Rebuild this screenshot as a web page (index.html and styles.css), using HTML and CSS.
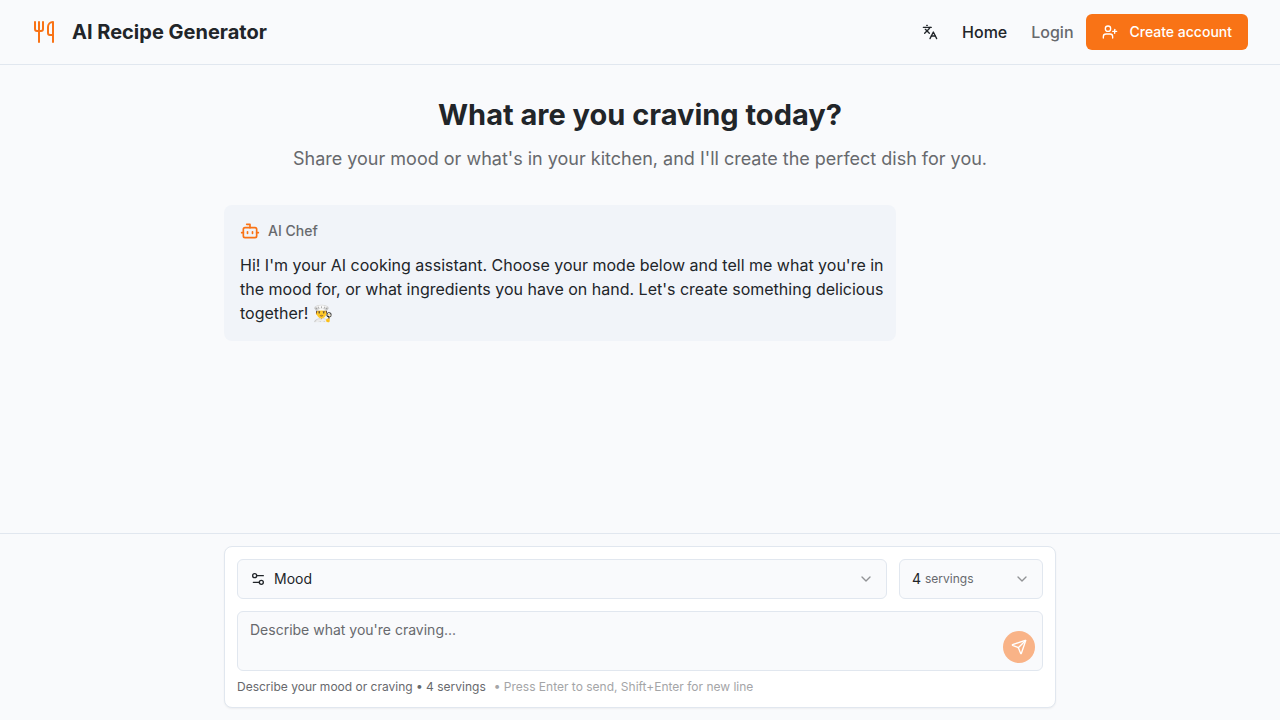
FILE: index.html
```html
<!DOCTYPE html>
<html lang="en">
<head>
    <meta charset="UTF-8">
    <meta name="viewport" content="width=device-width, initial-scale=1.0">
    <title>AI Recipe Generator</title>
    <link rel="stylesheet" href="styles.css">
</head>
<body>
    <header class="header">
        <a href="#" class="brand">
            <svg class="icon icon-lg" viewBox="0 0 24 24">
                <path d="M3 2v7c0 1.1.9 2 2 2h4a2 2 0 0 0 2-2V2"/>
                <path d="M7 2v20"/>
                <path d="M21 15V2a5 5 0 0 0-5 5v6c0 1.1.9 2 2 2h3Zm0 0v7"/>
            </svg>
            <span>AI Recipe Generator</span>
        </a>
        <nav class="nav">
            <button type="button" class="language" aria-label="Change language">
                <svg class="icon" viewBox="0 0 24 24">
                    <path d="m5 8 6 6"/>
                    <path d="m4 14 6-6 2-3"/>
                    <path d="M2 5h12"/>
                    <path d="M7 2h1"/>
                    <path d="m22 22-5-10-5 10"/>
                    <path d="M14 18h6"/>
                </svg>
            </button>
            <a href="#" class="active">Home</a>
            <div class="account">
                <a href="#login">Login</a>
                <a href="#signup" class="signup">
                    <svg class="icon" viewBox="0 0 24 24">
                        <path d="M16 21v-2a4 4 0 0 0-4-4H6a4 4 0 0 0-4 4v2"/>
                        <circle cx="9" cy="7" r="4"/>
                        <path d="M19 8v6"/>
                        <path d="M22 11h-6"/>
                    </svg>
                    Create account
                </a>
            </div>
        </nav>
    </header>

    <main class="main">
        <div class="container">
            <div class="intro">
                <h1>What are you craving today?</h1>
                <p>Share your mood or what's in your kitchen, and I'll create the perfect dish for you.</p>
            </div>
            <div class="message">
                <div class="message-author">
                    <svg class="icon icon-md" viewBox="0 0 24 24">
                        <path d="M12 8V4H8"/>
                        <rect width="16" height="12" x="4" y="8" rx="2"/>
                        <path d="M2 14h2"/>
                        <path d="M20 14h2"/>
                        <path d="M15 13v2"/>
                        <path d="M9 13v2"/>
                    </svg>
                    <span>AI Chef</span>
                </div>
                <p>Hi! I'm your AI cooking assistant. Choose your mode below and tell me what you're in the mood for, or what ingredients you have on hand. Let's create something delicious together! 👨‍🍳</p>
            </div>
        </div>
    </main>

    <footer class="composer">
        <div class="container">
            <form class="card" id="recipe-form">
                <div class="options">
                    <div class="select select-mode">
                        <svg class="icon select-icon" viewBox="0 0 24 24">
                            <path d="M20 7h-9"/>
                            <path d="M14 17H5"/>
                            <circle cx="17" cy="17" r="3"/>
                            <circle cx="7" cy="7" r="3"/>
                        </svg>
                        <select id="mode" aria-label="Mode">
                            <option>Mood</option>
                            <option>Ingredients</option>
                        </select>
                        <svg class="icon chevron" viewBox="0 0 24 24"><path d="m6 9 6 6 6-6"/></svg>
                    </div>
                    <div class="select select-servings">
                        <select id="servings">
                            <option>1</option>
                            <option>2</option>
                            <option>3</option>
                            <option selected>4</option>
                            <option>5</option>
                            <option>6</option>
                        </select>
                        <label for="servings" class="unit">servings</label>
                        <svg class="icon chevron" viewBox="0 0 24 24"><path d="m6 9 6 6 6-6"/></svg>
                    </div>
                </div>
                <div class="prompt">
                    <textarea id="prompt" aria-label="Describe what you're craving" placeholder="Describe what you're craving..."></textarea>
                    <button type="submit" class="send" aria-label="Send" disabled>
                        <svg class="icon" viewBox="0 0 24 24">
                            <path d="M14.536 21.686a.5.5 0 0 0 .937-.024l6.5-19a.496.496 0 0 0-.635-.635l-19 6.5a.5.5 0 0 0-.024.937l7.93 3.18a2 2 0 0 1 1.112 1.11z"/>
                            <path d="m21.854 2.147-10.94 10.939"/>
                        </svg>
                    </button>
                </div>
                <p class="hint">
                    <span>Describe your mood or craving • 4 servings</span>
                    <span class="hint-keys">• Press Enter to send, Shift+Enter for new line</span>
                </p>
            </form>
        </div>
    </footer>
</body>
</html>
```

FILE: styles.css
```css
* {
    box-sizing: border-box;
}
body {
    font-family: Inter, "Noto Color Emoji", sans-serif;
    font-size: 16px;
    line-height: 24px;
    margin: 0;
    color: #212529;
    background: #f9fafc;
    display: flex;
    flex-direction: column;
    min-height: 100vh;
}
h1, p {
    margin: 0;
}
a {
    color: inherit;
    text-decoration: none;
}
button, select, textarea {
    font: inherit;
    color: inherit;
}
.icon {
    width: 16px;
    height: 16px;
    flex-shrink: 0;
    fill: none;
    stroke: currentColor;
    stroke-width: 2;
    stroke-linecap: round;
    stroke-linejoin: round;
}
.icon-md {
    width: 20px;
    height: 20px;
    color: #f97316;
}
.icon-lg {
    width: 24px;
    height: 24px;
    color: #f97316;
}

/* header */
.header {
    display: flex;
    align-items: center;
    justify-content: space-between;
    padding: 14px 32px;
    border-bottom: 1px solid #e1e7ef;
}
.brand {
    display: flex;
    align-items: center;
    gap: 16px;
    font-size: 20px;
    font-weight: 700;
}
.nav {
    display: flex;
    align-items: center;
    gap: 24px;
    font-weight: 500;
    color: #67696d;
}
.nav .active {
    color: #212529;
}
.language {
    display: flex;
    padding: 0;
    border: none;
    background: none;
    color: #212529;
    cursor: pointer;
}
.account {
    display: flex;
    align-items: center;
    gap: 12px;
}
.signup {
    display: flex;
    align-items: center;
    gap: 12px;
    height: 36px;
    padding: 0 16px;
    border-radius: 6px;
    background: #f97316;
    color: white;
    font-size: 14px;
}
.signup:hover {
    background: #ea6a10;
}

/* conversation */
.main {
    flex-grow: 1;
    padding: 32px 0;
}
.container {
    max-width: 896px;
    margin: 0 auto;
    padding: 0 32px;
}
.intro {
    text-align: center;
    margin-bottom: 32px;
}
.intro h1 {
    font-size: 29px;
    line-height: 36px;
    font-weight: 700;
    margin-bottom: 12px;
}
.intro p {
    font-size: 18px;
    line-height: 28px;
    color: #67696d;
}
.message {
    max-width: 672px;
    padding: 16px 8px 16px 16px;
    border-radius: 8px;
    background: #f1f4f9;
}
.message-author {
    display: flex;
    align-items: center;
    gap: 8px;
    margin-bottom: 12px;
    font-size: 14px;
    line-height: 20px;
    font-weight: 500;
    color: #67696d;
}

/* composer */
.composer {
    padding: 12px 0;
    border-top: 1px solid #e1e7ef;
}
.card {
    padding: 12px;
    border: 1px solid #e1e7ef;
    border-radius: 8px;
    background: white;
    box-shadow: 0 1px 2px rgba(0, 0, 0, 0.05);
}
.options {
    display: flex;
    gap: 12px;
    margin-bottom: 12px;
}
.select {
    position: relative;
    display: flex;
    align-items: center;
}
.select-mode {
    flex-grow: 1;
}
.select-servings {
    width: 144px;
}
.select select {
    appearance: none;
    width: 100%;
    height: 40px;
    padding: 0 12px;
    border: 1px solid #e1e7ef;
    border-radius: 6px;
    background: #f9fafc;
    font-size: 14px;
}
.select-mode select {
    padding-left: 36px;
}
.select-icon, .chevron, .unit {
    position: absolute;
    pointer-events: none;
}
.select-icon {
    left: 13px;
}
.chevron {
    right: 13px;
    color: #919396;
}
.unit {
    left: 26px;
    font-size: 12px;
    color: #67696d;
}
.prompt {
    position: relative;
    margin-bottom: 8px;
}
.prompt textarea {
    display: block;
    width: 100%;
    height: 60px;
    padding: 8px 48px 8px 12px;
    border: 1px solid #e1e7ef;
    border-radius: 6px;
    background: #f9fafc;
    font-size: 14px;
    line-height: 20px;
    resize: none;
}
.prompt textarea::placeholder {
    color: #67696d;
}
.send {
    position: absolute;
    right: 8px;
    bottom: 8px;
    display: flex;
    align-items: center;
    justify-content: center;
    width: 32px;
    height: 32px;
    padding: 0;
    border: none;
    border-radius: 50%;
    background: #f97316;
    color: white;
}
.send:disabled {
    background: #f9b387;
}
.hint {
    display: flex;
    gap: 8px;
    font-size: 12px;
    line-height: 16px;
    color: #67696d;
}
.hint-keys {
    color: #a4a5a7;
}
```
